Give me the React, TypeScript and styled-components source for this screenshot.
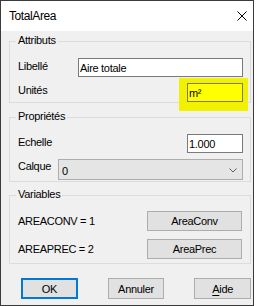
import * as React from 'react';
import styled, { createGlobalStyle } from 'styled-components';

const GlobalStyle = createGlobalStyle`
    html, body {
        margin: 0;
        padding: 0;
        background: #ffffff;
    }
    * {
        box-sizing: border-box;
    }
`;

const StyledWindow = styled.div`
    width: 254px;
    height: 306px;
    border: 1px solid #3b3b3b;
    background: #f0f0f0;
    display: flex;
    flex-direction: column;
    font-family: 'Liberation Sans', Arial, sans-serif;
    font-size: 11px;
    letter-spacing: -0.3px;
    color: #000;
`;

const StyledTitleBar = styled.div`
    height: 30px;
    background: #fff;
    display: flex;
    align-items: center;
    justify-content: space-between;
    padding: 0 6px 0 8px;
    font-size: 12px;
    letter-spacing: -0.4px;
`;

const StyledClient = styled.div`
    flex: 1;
    display: flex;
    flex-direction: column;
    padding: 10px 2px 6px 8px;
`;

const StyledGroup = styled.div<{ $top: number; $pad: string; $gap: number }>`
    position: relative;
    margin-top: ${(p) => p.$top}px;
    border: 1px solid #dcdcdc;
    padding: ${(p) => p.$pad};
    display: flex;
    flex-direction: column;
    gap: ${(p) => p.$gap}px;
`;

const StyledLegend = styled.span`
    position: absolute;
    top: -8px;
    left: 6px;
    padding: 0 2px;
    line-height: 13px;
    background: #f0f0f0;
`;

const StyledRow = styled.div<{ $h: number }>`
    height: ${(p) => p.$h}px;
    display: flex;
    align-items: center;
    justify-content: space-between;
`;

const StyledLabel = styled.span<{ $lift?: number }>`
    line-height: 13px;
    margin-bottom: ${(p) => (p.$lift ?? 0) * 2}px;
`;

const StyledInput = styled.input<{ $w: number; $bg?: string }>`
    width: ${(p) => p.$w}px;
    height: 19px;
    border: 1px solid #7a7a7a;
    background: ${(p) => p.$bg ?? '#fff'};
    padding: 0 1px;
    margin: 0;
    font: inherit;
    letter-spacing: inherit;
    color: #000;
    outline: none;
`;

const StyledHighlight = styled.div`
    background: #f2f200;
    margin: -5px -5px -9px -8px;
    padding: 5px 5px 9px 8px;
    display: flex;
`;

const StyledCombo = styled.div`
    width: 185px;
    height: 21px;
    border: 1px solid #adadad;
    background: #e5e5e5;
    display: flex;
    align-items: center;
    justify-content: space-between;
    padding: 2px 5px 0 3px;
`;

const StyledButton = styled.button<{ $w: number; $h: number; $focus?: boolean }>`
    width: ${(p) => p.$w}px;
    height: ${(p) => p.$h}px;
    margin: 0;
    padding: 0;
    background: #e1e1e1;
    border: ${(p) => (p.$focus ? '2px solid #0078d7' : '1px solid #adadad')};
    font: inherit;
    letter-spacing: inherit;
    color: #000;
    u {
        text-decoration-thickness: 1px;
        text-underline-offset: 2px;
    }
`;

const StyledFooter = styled.div`
    margin-top: 14px;
    display: flex;
    gap: 30px;
    padding-left: 12px;
`;

const CloseIcon = () => (
    <svg width="10" height="10" viewBox="0 0 10 10">
        <path d="M0.5 0.5 L9.5 9.5 M9.5 0.5 L0.5 9.5" stroke="#000" strokeWidth="1" fill="none" />
    </svg>
);

const ChevronIcon = () => (
    <svg width="8" height="5" viewBox="0 0 8 5">
        <path d="M0.5 0.5 L4 4 L7.5 0.5" stroke="#606060" strokeWidth="1" fill="none" />
    </svg>
);

export default function App() {
    return (
        <>
            <GlobalStyle />
            <StyledWindow>
                <StyledTitleBar>
                    <span>TotalArea</span>
                    <CloseIcon />
                </StyledTitleBar>
                <StyledClient>
                    <StyledGroup $top={0} $pad="16px 7px 0 8px" $gap={6}>
                        <StyledLegend>Attributs</StyledLegend>
                        <StyledRow $h={19}>
                            <StyledLabel $lift={1}>Libellé</StyledLabel>
                            <StyledInput $w={165} defaultValue="Aire totale" />
                        </StyledRow>
                        <StyledRow $h={19}>
                            <StyledLabel $lift={2}>Unités</StyledLabel>
                            <StyledHighlight>
                                <StyledInput $w={56} $bg="#ffff00" defaultValue="m²" />
                            </StyledHighlight>
                        </StyledRow>
                    </StyledGroup>

                    <StyledGroup $top={14} $pad="16px 7px 1px 8px" $gap={6}>
                        <StyledLegend>Propriétés</StyledLegend>
                        <StyledRow $h={19}>
                            <StyledLabel $lift={1}>Echelle</StyledLabel>
                            <StyledInput $w={56} defaultValue="1.000" />
                        </StyledRow>
                        <StyledRow $h={21}>
                            <StyledLabel $lift={3}>Calque</StyledLabel>
                            <StyledCombo>
                                <span>0</span>
                                <ChevronIcon />
                            </StyledCombo>
                        </StyledRow>
                    </StyledGroup>

                    <StyledGroup $top={13} $pad="15px 8px 4px 8px" $gap={8}>
                        <StyledLegend>Variables</StyledLegend>
                        <StyledRow $h={20}>
                            <StyledLabel>AREACONV = 1</StyledLabel>
                            <StyledButton $w={95} $h={20}>AreaConv</StyledButton>
                        </StyledRow>
                        <StyledRow $h={20}>
                            <StyledLabel>AREAPREC = 2</StyledLabel>
                            <StyledButton $w={95} $h={20}>AreaPrec</StyledButton>
                        </StyledRow>
                    </StyledGroup>

                    <StyledFooter>
                        <StyledButton $w={58} $h={21} $focus>OK</StyledButton>
                        <StyledButton $w={58} $h={21}>Annuler</StyledButton>
                        <StyledButton $w={58} $h={21}><u>A</u>ide</StyledButton>
                    </StyledFooter>
                </StyledClient>
            </StyledWindow>
        </>
    );
}
